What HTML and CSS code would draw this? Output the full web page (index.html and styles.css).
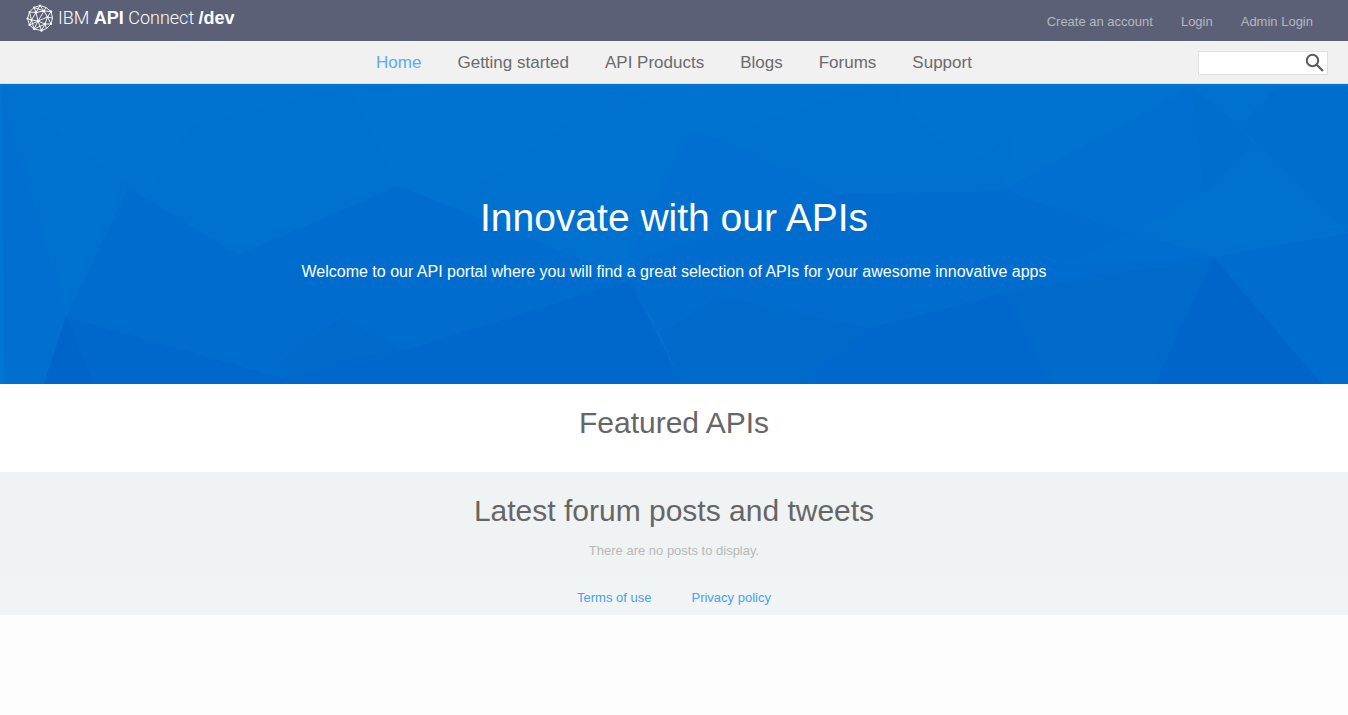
FILE: index.html
```html
<!DOCTYPE html>
<html lang="en">
<head>
<meta charset="utf-8">
<title>IBM API Connect /dev</title>
<link rel="stylesheet" href="styles.css">
</head>
<body>
<header class="topbar">
  <a class="brand" href="#">
    <svg class="brand-mark" viewBox="0 0 28 28" aria-hidden="true">
      <g fill="none" stroke="currentColor" stroke-width="0.9" stroke-linejoin="round">
        <path d="M14 1.5 20 3.5 25 7.5 26.5 14 25 20 20.5 24.5 15.5 26.5 8 25 3.500 21 1.500 14.500 3.500 8 8 3.500Z"/>
        <path d="M8 3.500 18 7 25 7.500M14 1.500 18 7 20 3.500M3.500 8 10 8.500 18 7M8 3.500 10 8.500 14 1.500M10 8.500 5.500 16 3.500 8M10 8.500 12 17 18 7 21.500 13 25 7.500M12 17 21.500 13 26.500 14M12 17 5.500 16 1.500 14.500M5.500 16 3.500 21 12 17 8 25M12 17 19 20 21.500 13 25 20 19 20 20.500 24.500M12 17 15.500 26.500 19 20M5.500 16 8 25 19 20"/>
      </g>
      <g fill="currentColor"><circle cx="14" cy="1.500" r="1"/><circle cx="8" cy="3.500" r="1"/><circle cx="25" cy="7.500" r="1.200"/><circle cx="18" cy="7" r="1.200"/><circle cx="10" cy="8.500" r="1.200"/><circle cx="3.500" cy="8" r="1"/><circle cx="1.500" cy="14.500" r="1"/><circle cx="12" cy="17" r="1.300"/><circle cx="5.500" cy="16" r="1.100"/><circle cx="21.500" cy="13" r="1.100"/><circle cx="19" cy="20" r="1.200"/><circle cx="25" cy="20" r="1.100"/><circle cx="15.500" cy="26.500" r="1.200"/><circle cx="8" cy="25" r="1"/><circle cx="3.500" cy="21" r="1.100"/></g>
    </svg>
    <span class="brand-name">IBM <b>API</b> Connect <b>/dev</b></span>
  </a>
  <nav class="account" aria-label="Account">
    <a href="#">Create an account</a>
    <a href="#">Login</a>
    <a href="#">Admin Login</a>
  </nav>
</header>
<div class="menubar">
  <nav class="menu" aria-label="Main">
    <a class="active" href="#">Home</a>
    <a href="#">Getting started</a>
    <a href="#">API Products</a>
    <a href="#">Blogs</a>
    <a href="#">Forums</a>
    <a href="#">Support</a>
  </nav>
  <form class="search" role="search">
    <input class="search-input" type="text" aria-label="Search">
    <button class="search-button" type="submit" aria-label="Search">
      <svg viewBox="0 0 20 20" aria-hidden="true"><circle cx="7.500" cy="7.500" r="5.700" fill="none" stroke="currentColor" stroke-width="2"/><path d="M11.700 11.700 18 18" stroke="currentColor" stroke-width="2.200"/></svg>
    </button>
  </form>
</div>
<main>
  <section class="hero">
    <svg class="facets" viewBox="0 0 1348 300" preserveAspectRatio="none" aria-hidden="true">
      <path fill="#0071cf" d="M0 0H1348V300H0Z"/>
      <path fill="#0073d0" d="M4 0H182L154 58 105 84Z"/>
      <path fill="#0072d0" d="M182 0H352L193 40 146 114 105 84 154 58ZM352 8 450 0 620 2 450 122 398 102ZM620 2 870 0 715 55ZM898 20V0H1192L1003 107 1015 50 970 80Z"/>
      <path fill="#006fcf" d="M4 20 66 233 44 300H4Z"/>
      <path fill="#006dce" d="M128 104 238 171 398 102 450 122 592 180 630 196 450 300H66V233Z"/>
      <path fill="#006dce" d="M630 196 715 55 840 110 1003 107 1213 173 1010 209 870 244 718 212 660 250Z"/>
      <path fill="#006fcf" d="M715 55 690 48 625 180 840 110ZM1003 107 1192 3 1205 105 1130 150Z"/>
      <path fill="#006ecd" d="M1192 3 1240 42 1252 60 1205 110ZM1280 0H1348V149L1240 42Z"/>
      <path fill="#006ccd" d="M1003 107 1130 150 1003 195Z"/>
      <path fill="#006ecf" d="M1130 150 1060 182 1213 173Z"/>
      <path fill="#006ccd" d="M1213 173 1348 149V300H1320Z"/>
      <path fill="#006acb" d="M342 233 403 267 283 294 279 278ZM718 212 870 244 1010 209 1022 205 1213 173 1155 300H682L660 250Z"/>
      <path fill="#0067cc" d="M66 233 283 294 403 267 630 196 682 300H44ZM870 244 1005 209 1050 300H800Z"/>
      <path fill="#0065cb" d="M66 233 94 300H44ZM1213 173 1322 300H1155Z"/>
      <path fill="#0075d2" d="M0 0H1348V2H2L4 300H0Z"/>
    </svg>
    <div class="hero-text">
      <h1>Innovate with our APIs</h1>
      <p>Welcome to our API portal where you will find a great selection of APIs for your awesome innovative apps</p>
    </div>
  </section>
  <section class="featured">
    <h2>Featured APIs</h2>
  </section>
  <section class="latest">
    <h2>Latest forum posts and tweets</h2>
    <p>There are no posts to display.</p>
  </section>
</main>
<footer class="footer">
  <a href="#">Terms of use</a>
  <a href="#">Privacy policy</a>
</footer>
</body>
</html>
```
FILE: styles.css
```css
* {
  box-sizing: border-box;
}

body {
  margin: 0;
  background: #fdfdfd;
  color: #666;
  font-family: "Liberation Sans", Arial, sans-serif;
  font-size: 13px;
  line-height: 20px;
}

a {
  color: inherit;
  text-decoration: none;
}

h1,
h2,
p {
  margin: 0;
  font-weight: 400;
}

.topbar {
  display: flex;
  justify-content: space-between;
  align-items: flex-start;
  min-height: 41px;
  padding: 4px 35px 0 26px;
  background: #5b6077;
}

.brand {
  display: flex;
  align-items: center;
  gap: 4px;
  color: #fff;
}

.brand-mark {
  width: 28px;
  height: 28px;
}

.brand-name {
  font-family: Roboto, "Liberation Sans", sans-serif;
  font-size: 18px;
  font-weight: 300;
  line-height: 28px;
  white-space: nowrap;
}

.brand-name b {
  font-family: "Liberation Sans", Arial, sans-serif;
  font-weight: 700;
}

.account {
  display: flex;
  gap: 28px;
  padding-top: 8px;
  color: #b4b8c1;
}

.menubar {
  display: grid;
  grid-template-columns: 1fr auto 1fr;
  align-items: center;
  min-height: 43px;
  padding: 2px 20px 0;
  background: #f1f1f1;
  border-bottom: 1px solid #e0e3e5;
}

.menu {
  grid-column: 2;
  display: flex;
  gap: 36px;
  font-size: 17px;
  line-height: 24px;
  color: #6b6b6b;
}

.menu .active {
  color: #5aaafa;
}

.search {
  display: flex;
  justify-self: end;
  width: 130px;
  height: 24px;
  background: #fff;
  border: 1px solid #e0e0e0;
}

.search-input {
  flex: 1;
  min-width: 0;
  padding: 0 4px;
  border: 0;
  background: transparent;
  font: inherit;
}

.search-button {
  width: 24px;
  padding: 1px 2px;
  border: 0;
  background: transparent;
  color: #5a5a5a;
}

.search-button svg {
  display: block;
  width: 20px;
  height: 20px;
}

.hero {
  position: relative;
  display: flex;
  justify-content: center;
  align-items: center;
  min-height: 300px;
  padding: 24px;
  background: #006fce;
  color: #fff;
  text-align: center;
}

.facets {
  position: absolute;
  inset: 0;
  width: 100%;
  height: 100%;
}

.hero-text {
  position: relative;
  padding-top: 10px;
}

.hero h1 {
  margin-bottom: 18px;
  font-size: 39px;
  line-height: 48px;
}

.hero p {
  font-size: 16px;
  line-height: 24px;
}

.featured,
.latest {
  padding: 20px;
  text-align: center;
}

.featured {
  min-height: 88px;
  background: #fff;
}

.latest {
  min-height: 108px;
  background: #eff3f4;
  color: #b8b8b8;
}

.featured h2,
.latest h2 {
  color: #666;
  font-size: 30px;
  line-height: 38px;
}

.latest p {
  padding-top: 11px;
}

.latest {
  padding-bottom: 19px;
}

.footer {
  display: flex;
  justify-content: center;
  gap: 40px;
  padding: 8px 20px 7px;
  background: #f0f4f5;
  color: #4a9ff5;
}
```
